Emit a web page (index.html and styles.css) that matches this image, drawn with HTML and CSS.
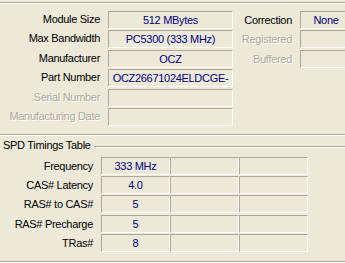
FILE: index.html
```html
<!DOCTYPE html>
<html lang="en">
<head>
    <meta charset="UTF-8">
    <meta name="viewport" content="width=device-width, initial-scale=1.0">
    <title>SPD</title>
    <link rel="stylesheet" href="styles.css">
</head>
<body>
    <div class="panel">
        <section class="group module">
            <div class="module-cols">
                <div class="grid left">
                    <span class="label">Module Size</span><span class="field">512 MBytes</span>
                    <span class="label">Max Bandwidth</span><span class="field">PC5300 (333 MHz)</span>
                    <span class="label">Manufacturer</span><span class="field">OCZ</span>
                    <span class="label">Part Number</span><span class="field">OCZ26671024ELDCGE-</span>
                    <span class="label off">Serial Number</span><span class="field"></span>
                    <span class="label off">Manufacturing Date</span><span class="field"></span>
                </div>
                <div class="grid right">
                    <span class="label">Correction</span><span class="field">None</span>
                    <span class="label off">Registered</span><span class="field"></span>
                    <span class="label off">Buffered</span><span class="field"></span>
                </div>
            </div>
        </section>

        <section class="group spd">
            <div class="legend"><span>SPD Timings Table</span><i class="rule"></i></div>
            <div class="grid timings">
                <span class="label">Frequency</span><span class="field">333 MHz</span><span class="field"></span><span class="field"></span>
                <span class="label">CAS# Latency</span><span class="field">4.0</span><span class="field"></span><span class="field"></span>
                <span class="label">RAS# to CAS#</span><span class="field">5</span><span class="field"></span><span class="field"></span>
                <span class="label">RAS# Precharge</span><span class="field">5</span><span class="field"></span><span class="field"></span>
                <span class="label">TRas#</span><span class="field">8</span><span class="field"></span><span class="field"></span>
            </div>
        </section>
    </div>
</body>
</html>
```

FILE: styles.css
```css
html, body {
    margin: 0;
    width: 345px;
    height: 263px;
    overflow: hidden;
}

body {
    background-color: #ece9d8;
    font-family: 'Liberation Sans', Arial, sans-serif;
    font-size: 11px;
    letter-spacing: -0.3px; /* closer to Tahoma widths */
    color: #000;
}

.panel {
    padding-top: 2px;
}

/* etched group box lines: gray with white under it */
.group {
    border-bottom: 1px solid #aca899;
    box-shadow: 0 1px #fff;
}

.module {
    border-top: 1px solid #aca899;
    box-shadow: inset 0 1px #fff, 0 1px #fff;
    padding: 8px 0;
}

.module-cols {
    display: flex;
}

.grid {
    display: grid;
    grid-auto-rows: 18px;
}

.left {
    grid-template-columns: 108px 125px;
    row-gap: 1.4px;
}

.right {
    flex: none;
    grid-template-columns: 67px 52px;
    row-gap: 1.4px;
}

.label {
    padding-right: 8px;
    text-align: right;
    white-space: nowrap;
    line-height: 18px;
}

.left .label {
    line-height: 17px;
}

.label.off {
    color: #aca899;
    text-shadow: 1px 1px #fff;
}

.field {
    box-sizing: border-box;
    height: 18px;
    border-top: 1px solid #aca899;
    border-left: 1px solid #aca899;
    border-right: 1px solid #fff;
    border-bottom: 1px solid #fff;
    line-height: 16px;
    text-align: center;
    white-space: nowrap;
    overflow: hidden;
    color: #000080;
}

.spd {
    margin-top: 4px;
    padding-bottom: 9px;
}

.legend {
    display: flex;
    height: 13px;
    line-height: 13px;
}

.legend span {
    padding: 0 3px;
}

.rule {
    flex: 1;
    align-self: flex-start;
    margin-top: 7px;
    border-top: 1px solid #aca899;
    border-bottom: 1px solid #fff;
}

.timings {
    margin-top: 5px;
    grid-template-columns: 101px 69px 69px 69px;
    row-gap: 1.25px;
}
```
